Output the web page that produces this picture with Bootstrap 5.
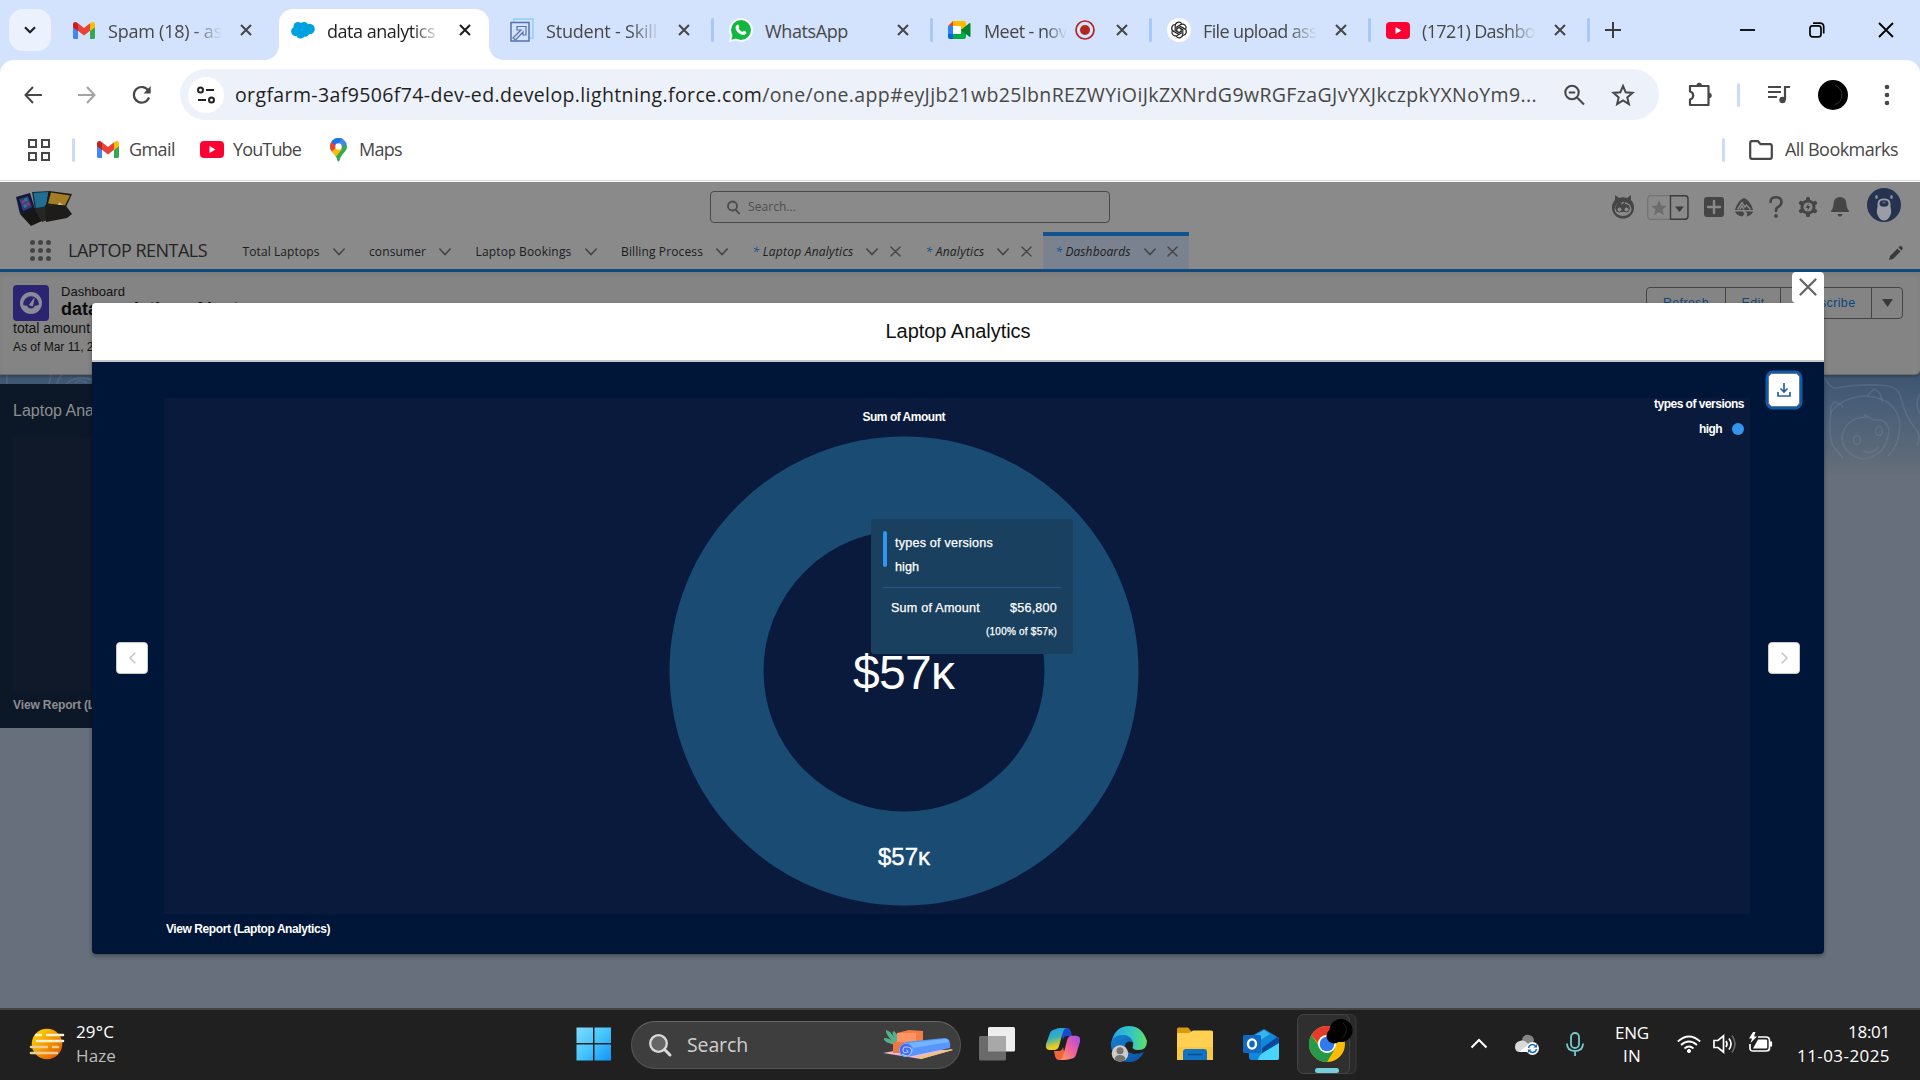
<!DOCTYPE html>
<html lang="en">
<head>
<meta charset="utf-8">
<title>data analytics</title>
<link rel="stylesheet" href="https://cdn.jsdelivr.net/npm/bootstrap@5.3.0/dist/css/bootstrap.min.css">
<style>
html,body{width:1920px;height:1080px;overflow:hidden}
body{font-family:"Open Sans","Noto Sans",sans-serif;line-height:1;color:#474747;background:#666f7b}
svg{display:block;flex:none;overflow:visible}
.fit{display:inline-block;white-space:nowrap;flex:none}
.slds{font-family:"Liberation Sans",Arial,sans-serif}
.segoe{font-family:"Open Sans","Noto Sans",sans-serif}
/* browser chrome */
.tabstrip{height:60px;background:#d3e3fd;padding-left:9px}
.tab-search{width:42px;height:42px;margin:9px 4px 0 0;border-radius:14px;background:#ebf2fe}
.tab-item{width:219px;height:60px;padding-left:17px;font-size:18px;position:relative}
.tab-item .ico{width:25px;margin-right:11px}
.tab-item .ico.gmail{padding-left:1px}
.tab-item .ttl{width:114px;height:28px;line-height:28px;white-space:nowrap;padding-top:1px}
.tab-item .fade-end{-webkit-mask-image:linear-gradient(90deg,#000 74%,transparent);mask-image:linear-gradient(90deg,#000 74%,transparent)}
.tab-item .x-btn{width:12px;height:12px;margin-left:18px}
.tab-item.meet .ttl{width:83px}
.tab-item.meet .rec{margin-left:8px}
.tab-item.meet .x-btn{margin-left:21px}
.tab-item.split::before{content:"";position:absolute;left:-1px;top:18px;width:3px;height:24px;background:#a8c7fa;border-radius:2px}
.tab-item.on{color:#1f1f1f}
.tab-item.on::after{content:"";position:absolute;left:5px;right:4px;top:9px;bottom:0;background:#fff;border-radius:14px 14px 0 0;z-index:0}
.tab-item.on>*{z-index:1;position:relative}
.tab-item .foot{position:absolute!important;bottom:0;width:14px;height:14px}
.foot.l{left:-9px;background:radial-gradient(circle at 0 0,transparent 13.5px,#fff 14px)}
.foot.r{right:-10px;background:radial-gradient(circle at 100% 0,transparent 13.5px,#fff 14px)}
.tab-item.plus{width:auto;padding-left:17px}
.win-btns{gap:53px;padding-right:26px}
.chrome-body{background:#d3e3fd;height:120px}
.chrome-in{background:#fff;border-radius:14px 14px 0 0;height:120px;padding-top:9px}
.addr-row{height:51px;padding-left:7px}
.nav-slot{width:53px}
.nav-slot.back{padding-right:2px}
.omni{width:1479px;height:51px;border-radius:26px;background:#edf1fa;margin-left:14px;padding-left:8px}
.site-ico{width:36px;height:36px;background:#fff;margin-right:11px}
.url{font-size:19.5px;color:#474747;height:28px;line-height:28px}
.url b{font-weight:400;color:#1f1f1f}
.g25{margin-left:25px}.g27{margin-left:27px}.g29{margin-left:29px}
.vbar{width:3px;height:24px;border-radius:2px;background:#c9ddfb}
.bm-row{height:59px;font-size:18px;padding-left:28px;padding-right:22px}
.bm-apps{margin-right:22px}
.bm-1{margin:0 10px 0 22px}.bm-2{margin:0 9px 0 25px}.bm-3{margin:0 12px 0 29px}
.bm-fold{margin:0 12px 0 24px}
.bm-row .fit{padding-bottom:1px}
.chrome-edge{height:2px;background:linear-gradient(#dcdcdc 50%,#fff 50%)}
/* page */
.app{height:826px;background:#666f7b;position:relative;overflow:hidden}
.ghead{height:50px;background:#8a8a8a;padding-left:16px}
.gsearch{width:400px;height:32px;border:1.5px solid #4a4a4a;border-radius:4px;margin:9px 0 0 638px;padding:0 16px;font-size:12px;color:#4f4f4f}
.gicons{margin-left:502px}
.fav{width:42px;height:25px;margin:0 15px 0 13px}
.i1{margin-left:10px}.i2{margin-left:15px}.i3{margin-left:15px}.i4{margin-left:12px}
.gav{margin:0 0 4px 17px}
.gnav{height:40px;background:#8a8a8a;border-bottom:3px solid #0f4a80;padding-left:30px;font-size:12px;color:#1c1c1c}
.gnav .nm{font-size:18px;color:#242424;margin:0 23px 0 17px;padding-bottom:1px}
.ntab{height:37px;padding:2px 12px 0 12.5px}
.ntab .chev{margin-left:13px}
.ntab .cls{margin-left:11.5px}
.ntab i b{font-weight:400;color:#0f5490}
.ntab.on{background:#7a8290;border-top:4px solid #0f5490;margin-left:-1px;padding-top:0;padding-right:11px;padding-bottom:1.5px}
.pencil{margin-right:17px}
.dhead{height:103px;background:#848484;border-bottom:1.5px solid #6e6a66;border-radius:0 0 5px 0;padding:13px 17px 0 13px;color:#111;box-shadow:0 2px 2px #0003,inset 0 4px 4px #0000000c;position:relative;z-index:1}
.dico{width:36px;height:36px;border-radius:4px;background:#2b2472;margin-right:12px}
.dtitle{margin-top:-1px}
.dtxt{font-size:13px;line-height:15px}
.dname{font-size:18px;line-height:20px;font-weight:700;color:#0b0b0b}
.dsub{font-size:14px;line-height:16px;margin-top:-1px}
.dasof{font-size:12px;line-height:14px;margin-top:4px}
.abtns{height:32px;border:1.5px solid #454545;border-radius:4px;color:#0d477c;font-size:12.5px;margin-top:2px}
.abtns>div+div{border-left:1.5px solid #454545}
.abtns .a{width:78px}.abtns .b{width:55px}.abtns .c{width:91px}.abtns .d{width:31px}
.sky{background:linear-gradient(#3c5470,#4a5f78 35%,#5a6878 75%,#666f7b);height:105px;margin-top:-4px;position:relative;z-index:0}
.sky svg{position:absolute;left:0;top:0}
.backcard{position:absolute;left:0;top:202px;width:300px;height:344px;background:#0c1827;padding:18px 13px;color:#8d8e90;z-index:1}
.backcard .t{font-size:16px;line-height:18px}
.backcard .in{height:254px;background:#10192a;margin:17px 0 8px}
.backcard .v{font-size:12px;font-weight:700}
/* modal */
.dlg{position:absolute;left:92px;top:121px;width:1732px;height:651px;border-radius:4px;z-index:3;box-shadow:0 2px 4px #0005;color:#fff}
.dlg-h{height:57px;background:#fff;color:#111;border-radius:4px 0 0 0;font-size:20px;padding-bottom:2px}
.dlg-b{height:594px;background:#001639;border-top:2px solid #c9c9c9;border-radius:0 0 4px 4px}
.dlg-x{position:absolute;right:0;top:-31px;width:32px;height:31px;background:#fff;border-radius:4px 4px 0 4px;padding-bottom:1px}
.side{width:72px;height:592px}
.side.r{width:74px}
.arrow{width:32px;height:32px;background:#fff;border-radius:4px;border:1px solid #c9c9c9;margin-left:24px;margin-top:280px}
.side.r .arrow{margin-left:18px;margin-top:235px}
.dl{width:32px;height:34px;margin:11px 0 0 18px;background:#fff;border-radius:5px;border:1px solid #777;box-shadow:0 0 0 2.5px #0b5cab}
.mid{width:1586px}
.plot{height:516px;margin-top:36px;background:#0a1a3c;position:relative;font-size:12px}
.plot>svg{position:absolute;left:0;top:0}
.vr2{font-size:12px;font-weight:700;margin:9px 0 0 2px}
.legend{position:absolute;right:6px;top:0;font-weight:700}
.legend .key{margin-top:13px}
.legend .dot{width:12px;height:12px;border-radius:50%;background:#3296ed;margin-left:10px}
.tip{position:absolute;left:707px;top:121px;width:202px;height:135px;background:#1a405f;border-radius:3px;padding:12px;font-size:12.600px}
.tip .fit{-webkit-text-stroke:.25px #fff}
.tip .bar{width:4px;height:36px;border-radius:2px;background:#3296ed;margin-right:8px}
.tip .two{line-height:24px}
.tip .hr2{height:1px;background:#2c5488;margin:8px 0 14px}
.tip .row-a{padding:0 4px 0 8px}
.tip .row-b{padding:12px 4px 0 0;font-size:10px}
/* taskbar */
.task{height:72px;background:#202020;border-top:2px solid #444;color:#fff;font-size:17px;padding-bottom:2px}
.wx{width:576px;padding-left:29px}
.wx .tx{margin-left:11px;line-height:24px}
.wx .sub{color:#bdbdbd}
.sbox{width:330px;height:48px;border-radius:24px;background:#3e3e3e;border:1.5px solid #555;border-top-color:#666;margin:1px 18px 0 19px;padding:0 7px 0 17px;font-size:19.5px;color:#cfcfcf}
.sbox .fit{margin-left:16px}
.t2{margin-left:31px}.t4{margin-left:30px}.t5{margin-left:18px}
.chrome-app{width:60px;height:60px;position:relative}
.tray{padding-right:30px}
.m24{margin-left:24px}.m28{margin-left:28px}.m12{margin-left:12px}
.lh23{line-height:23px}.lh24{line-height:24px}
</style>
<script src="https://cdn.jsdelivr.net/npm/bootstrap@5.3.0/dist/js/bootstrap.bundle.min.js"></script>
</head>
<body class="d-flex flex-column">
<svg width="0" height="0" class="position-absolute">
<defs>
<symbol id="x" viewBox="0 0 12 12"><path d="M1 1l10 10M11 1L1 11" stroke="currentColor" stroke-width="2.1" fill="none"/></symbol>
<symbol id="thinx" viewBox="0 0 12 12"><path d="M1 1l10 10M11 1L1 11" stroke="#454545" stroke-width="1.5" stroke-linecap="round" fill="none"/></symbol>
<symbol id="chev" viewBox="0 0 12 8"><path d="M.8 1L6 6.600 11.200 1" stroke="#454545" stroke-width="1.6" stroke-linecap="round" fill="none"/></symbol>
<symbol id="gm" viewBox="0 0 22 17"><path d="M0 2.500V15.500Q0 17 1.500 17H5V7z" fill="#4285f4"/><path d="M22 2.500V15.500Q22 17 20.500 17H17V7z" fill="#34a853"/><path d="M17 1.500V9l5-3.800V2.500C22 0 19.500-.6 17.800.7z" fill="#fbbc04"/><path d="M5 1.500V9L0 5.200V2.500C0 0 2.500-.6 4.200.7z" fill="#c5221f"/><path d="M5 1.300L11 6l6-4.700V8.800L11 13.400 5 8.800z" fill="#ea4335"/></symbol>
<symbol id="yt" viewBox="0 0 24 17"><rect width="24" height="17" rx="4" fill="#ff0033"/><path d="M9.500 5v7l6-3.500z" fill="#fff"/></symbol>
</defs>
</svg>

<!-- tab strip -->
<div class="tabstrip d-flex">
  <div class="tab-search d-flex align-items-center justify-content-center"><svg width="12" height="8" viewBox="0 0 12 8"><path d="M1 1.200l5 5 5-5" stroke="#1f1f1f" stroke-width="2.200" fill="none"/></svg></div>
  <div class="tab-item d-flex align-items-center"><div class="ico gmail"><svg width="22" height="17"><use href="#gm"/></svg></div><div class="ttl fade-end"><span class="fit" data-w="114">Spam (18) - as</span></div><svg class="x-btn"><use href="#x"/></svg></div>
  <div class="tab-item on d-flex align-items-center"><span class="foot l"></span><div class="ico"><svg width="24" height="18" viewBox="0 0 24 17"><g fill="#00a1e0"><circle cx="7" cy="5" r="4.500"/><circle cx="13" cy="4.500" r="4"/><circle cx="18.500" cy="7.500" r="5.300"/><circle cx="4.800" cy="10" r="4.700"/><circle cx="9.500" cy="12.500" r="4.500"/><circle cx="14" cy="11" r="4.300"/></g></svg></div><div class="ttl fade-end"><span class="fit" data-w="108">data analytics</span></div><svg class="x-btn"><use href="#x"/></svg><span class="foot r"></span></div>
  <div class="tab-item d-flex align-items-center"><div class="ico"><svg width="24" height="24" viewBox="0 0 24 24" fill="none"><path d="M4 4V1H23V20H19" stroke="#8fd0f4" stroke-width="1.500"/><path d="M1 4.500H19V23H1z" stroke="#5672ac" stroke-width="1.500"/><path d="M3 20l8-8H7V8.500h9V17h-3v-3L5.500 22z" stroke="#5672ac" stroke-width="1.200"/></svg></div><div class="ttl fade-end"><span class="fit" data-w="111">Student - Skill</span></div><svg class="x-btn"><use href="#x"/></svg></div>
  <div class="tab-item split d-flex align-items-center"><div class="ico"><svg width="24" height="24" viewBox="0 0 24 24"><circle cx="12" cy="12" r="11.800" fill="#fff"/><path d="M0 24l2-7 6 5z" fill="#fff"/><circle cx="12" cy="12" r="10" fill="#12b83e"/><path d="M2.300 21.700l1.500-5.500 4 4z" fill="#12b83e"/><path d="M7.500 7.500c1-1.500 2-1 2.500.5.400 1.200.4 1.500-.3 2.500.9 1.600 2 2.600 3.800 3.400.8-1 1.200-1.300 2-.9 2 .9 2.200 1.200 1.600 2.300-1.100 2-3.300 2-5.600.9-2.800-1.300-5-4.100-5-6.400 0-.9.400-1.600 1-2.300z" fill="#fff"/></svg></div><div class="ttl"><span class="fit" data-w="83">WhatsApp</span></div><svg class="x-btn"><use href="#x"/></svg></div>
  <div class="tab-item meet split d-flex align-items-center"><div class="ico"><svg width="23" height="18" viewBox="0 0 23 18"><path d="M0 5H5V13H0z" fill="#2684fc"/><path d="M0 13H5V18H2Q0 18 0 16z" fill="#0066da"/><path d="M5 0V5H0z" fill="#ea4335"/><path d="M5 0H16Q18 0 18 2V7L13 10V5H5z" fill="#ffba00"/><path d="M5 13H13V8l5 3v5Q18 18 16 18H5z" fill="#00ac47"/><path d="M13 9l8-6.600Q22.500 1.500 22.500 3V15q0 1.500-1.500.6z" fill="#00832d"/><path d="M5 5H13V13H5z" fill="#fff"/></svg></div><div class="ttl fade-end"><span class="fit" data-w="83">Meet - nov</span></div><svg class="rec" width="20" height="20" viewBox="0 0 20 20"><circle cx="10" cy="10" r="9" fill="none" stroke="#b3261e" stroke-width="1.700"/><circle cx="10" cy="10" r="5" fill="#b3261e"/></svg><svg class="x-btn"><use href="#x"/></svg></div>
  <div class="tab-item split d-flex align-items-center"><div class="ico"><svg width="24" height="24" viewBox="0 0 24 24"><circle cx="12" cy="12" r="12" fill="#fff"/><g fill="none" stroke="#222" stroke-width="1.200"><path id="pt" d="M12 14.500L8.200 12.300V7.700a3.600 3.600 0 0 1 6.500-2"/><use href="#pt" transform="rotate(60 12 12)"/><use href="#pt" transform="rotate(120 12 12)"/><use href="#pt" transform="rotate(180 12 12)"/><use href="#pt" transform="rotate(240 12 12)"/><use href="#pt" transform="rotate(300 12 12)"/></g></svg></div><div class="ttl fade-end"><span class="fit" data-w="114">File upload ass</span></div><svg class="x-btn"><use href="#x"/></svg></div>
  <div class="tab-item split d-flex align-items-center"><div class="ico"><svg width="24" height="17"><use href="#yt"/></svg></div><div class="ttl fade-end"><span class="fit" data-w="113">(1721) Dashbo</span></div><svg class="x-btn"><use href="#x"/></svg></div>
  <div class="tab-item plus split d-flex align-items-center"><svg width="16" height="16" viewBox="0 0 16 16"><path d="M8 0V16M0 8H16" stroke="#3c3c3c" stroke-width="2"/></svg></div>
  <div class="win-btns d-flex align-items-center ms-auto">
    <svg width="16" height="16" viewBox="0 0 16 16"><path d="M0 8H15" stroke="#000" stroke-width="1.800"/></svg>
    <svg width="16" height="16" viewBox="0 0 16 16" fill="none" stroke="#000" stroke-width="1.700"><rect x="1" y="3.800" width="11" height="11" rx="2.500"/><path d="M4 1.200h7q3.700 0 3.700 3.700v6.500"/></svg>
    <svg width="16" height="16" viewBox="0 0 16 16"><path d="M1 1l14 14M15 1L1 15" stroke="#000" stroke-width="1.800"/></svg>
  </div>
</div>

<!-- toolbar and bookmarks -->
<div class="chrome-body">
<div class="chrome-in">
  <div class="addr-row d-flex align-items-center">
    <div class="nav-slot back d-flex justify-content-center"><svg width="18" height="18" viewBox="0 0 18 18" fill="none" stroke="#474747" stroke-width="2"><path d="M9 1L1.500 9 9 17M1.500 9H18"/></svg></div>
    <div class="nav-slot d-flex justify-content-center"><svg width="18" height="18" viewBox="0 0 18 18" fill="none" stroke="#a3a3a3" stroke-width="2"><path d="M9 1l7.500 8L9 17M16.500 9H0"/></svg></div>
    <div class="nav-slot d-flex justify-content-center ps-1"><svg width="18" height="18" viewBox="0 0 18 18" fill="none" stroke="#474747" stroke-width="2.200"><path d="M16 11.500A7.800 7.800 0 1 1 15.500 5"/><path d="M17.700 0V7.500H10.500z" fill="#474747" stroke="none"/></svg></div>
    <div class="omni d-flex align-items-center">
      <div class="site-ico rounded-circle d-flex align-items-center justify-content-center"><svg width="18" height="18" viewBox="0 0 18 18" fill="none" stroke="#222" stroke-width="2"><circle cx="3.500" cy="4" r="2.500"/><path d="M9 4h8M1 14h8"/><circle cx="14.500" cy="14" r="2.500"/></svg></div>
      <span class="url fit" data-w="1302"><b>orgfarm-3af9506f74-dev-ed.develop.lightning.force.com</b>/one/one.app#eyJjb21wb25lbnREZWYiOiJkZXNrdG9wRGFzaGJvYXJkczpkYXNoYm9...</span>
      <svg class="g25" width="24" height="24" viewBox="0 0 24 24" fill="none" stroke="#474747" stroke-width="2.100"><circle cx="10" cy="9.500" r="6.700"/><path d="M15 14.500l7 7M6.800 9.500h6.400"/></svg>
      <svg class="g25" width="24" height="24" viewBox="0 0 24 24" fill="none" stroke="#474747" stroke-width="2"><path d="M12 3l2.700 6.300 6.800.6-5.200 4.500 1.600 6.700L12 17.500l-5.900 3.600 1.600-6.700L2.500 9.900l6.800-.6z"/></svg>
    </div>
    <svg class="g29" width="24" height="24" viewBox="0 0 24 24" fill="none" stroke="#474747" stroke-width="2.200"><path d="M2 3H20.500V22H2V16.500q3.200-.8 3.200-4t-3.200-4z" stroke-linejoin="round"/><path d="M8.500 2.500a2.700 2.700 0 0 1 5.400 0zM21 9.800a2.700 2.700 0 0 1 0 5.400z" fill="#474747" stroke="none"/></svg>
    <div class="vbar g25"></div>
    <svg class="g27" width="24" height="24" viewBox="0 0 24 24" fill="none" stroke="#474747" stroke-width="2.200"><path d="M1 4h13M1 9h13M1 14h9"/><path d="M18 17V4h5"/><circle cx="15.500" cy="17" r="3.200" fill="#474747" stroke="none"/></svg>
    <svg class="g27" width="30" height="30" viewBox="0 0 30 30"><circle cx="15" cy="15" r="15" fill="#000"/><path d="M17 5.500a10 10 0 0 1 0 19" stroke="#333" fill="none"/></svg>
    <svg class="g27" width="24" height="24" viewBox="0 0 24 24" fill="#474747"><circle cx="12" cy="4" r="2.300"/><circle cx="12" cy="12" r="2.300"/><circle cx="12" cy="20" r="2.300"/></svg>
  </div>
  <div class="bm-row d-flex align-items-center">
    <svg class="bm-apps" width="22" height="22" viewBox="0 0 22 22" fill="none" stroke="#474747" stroke-width="2"><path d="M1 1h7v7H1zM14 1h7v7h-7zM1 14h7v7H1zM14 14h7v7h-7z"/></svg>
    <div class="vbar"></div>
    <svg class="bm-1" width="22" height="17"><use href="#gm"/></svg><span class="fit" data-w="46">Gmail</span>
    <svg class="bm-2" width="24" height="17"><use href="#yt"/></svg><span class="fit" data-w="68">YouTube</span>
    <svg class="bm-3" width="17" height="24" viewBox="0 0 17 24"><clipPath id="pin"><path d="M8.500 0A8.400 8.400 0 0 1 17 8.500C17 14 11 15.500 9.800 22Q8.500 25 7.200 22C6 15.500 0 14 0 8.500A8.400 8.400 0 0 1 8.500 0z"/></clipPath><g clip-path="url(#pin)"><path d="M0 0H17V24H0z" fill="#34a853"/><path d="M0 18V8L8 8l4 3-7 9z" fill="#fbbc04"/><path d="M0 0L8 8 0 15z" fill="#ea4335"/><path d="M1 0H14L7 8.500 1.500 4z" fill="#1a73e8"/><path d="M12 0L17 6 8 10 7 8z" fill="#4285f4"/></g><circle cx="8.500" cy="8.500" r="3.200" fill="#fff"/></svg><span class="fit" data-w="43">Maps</span>
    <div class="vbar ms-auto"></div>
    <svg class="bm-fold" width="24" height="20" viewBox="0 0 24 20" fill="none" stroke="#474747" stroke-width="2.200"><path d="M1.200 17V3q0-1.800 1.800-1.800H9l2.500 3H21q1.800 0 1.800 1.800V17q0 1.800-1.800 1.800H3Q1.200 18.800 1.200 17z"/></svg><span class="fit" data-w="113">All Bookmarks</span>
  </div>
</div>
</div>
<div class="chrome-edge"></div>

<!-- application page -->
<div class="app slds">
  <div class="ghead d-flex align-items-center">
    <svg width="56" height="36" viewBox="0 -1 56 36"><path d="M0 7L14 3l5 16L4 24z" fill="#15153a"/><path d="M3 9l9-3 4 11-9 4z" fill="#2b3f78"/><path d="M5 11l3-1 1 3-3 1zM10 13l3-1 1 3-3 1z" fill="#8a3b76"/><path d="M8 9l3-1 1 3-3 1zM7 15l3-1 1 3-3 1z" fill="#2f7a8e"/><path d="M16 2L34 1 32 20 19 20z" fill="#122c3a"/><path d="M17.500 3L32 2 31 16 20 18z" fill="#1f6f94"/><path d="M33 1L56 4 50 17 30 15z" fill="#1c1a12"/><path d="M35 2.500l19 3-5 10-17-2z" fill="#a57c26"/><path d="M43 12l4 3h-5z" fill="#c9b98a"/><path d="M4 24l15-6 9 12-13 6z" fill="#161616"/><path d="M19 20l12-4 3 13-8 3z" fill="#262626"/><path d="M29 15l21 1 6 8-5 4-21 4z" fill="#1d1c1a"/></svg>
    <div class="gsearch segoe d-flex align-items-center align-self-start"><svg width="13" height="14" viewBox="0 0 13 14" fill="none" stroke="#4a4a4a" stroke-width="1.800"><circle cx="5.500" cy="6" r="4.500"/><path d="M8.800 9.800L12.500 14"/></svg><span class="fit ms-2 text-start" data-w="48">Search...</span></div>
    <div class="gicons d-flex align-items-center">
      <svg width="22" height="26" viewBox="0 0 22 26"><path d="M3 6V1l4 3q4-1.500 8 0l4-3v5a11 11 0 1 1-16 0z" fill="#454545"/><ellipse cx="11" cy="15" rx="8.500" ry="7" fill="#8a8a8a"/><path d="M3 14q2-6 7-6l-1 3 4-3 0 2q4 0 5 4l-2 4H5z" fill="#454545"/><circle cx="7.500" cy="15.500" r="2.500" fill="#8a8a8a" stroke="#454545"/><circle cx="14.500" cy="15.500" r="2.500" fill="#8a8a8a" stroke="#454545"/></svg>
      <svg class="fav" viewBox="0 0 42 25"><rect x=".7" y=".7" width="40" height="23.600" rx="3" fill="none" stroke="#747474" stroke-width="1.300"/><path d="M23.500.7H38q3 0 3 3v17.600q0 3-3 3H23.500z" fill="none" stroke="#3c3c3c" stroke-width="1.400"/><path d="M12 5l2.200 5.500 5.600.4-4.300 3.700 1.400 5.700L12 17.200l-4.900 3.100 1.400-5.700-4.300-3.700 5.600-.4z" fill="#6c6c6c"/><path d="M28 11.500h9l-4.500 5.500z" fill="#3c3c3c"/></svg>
      <svg width="20" height="20" viewBox="0 0 20 20"><rect width="20" height="20" rx="3" fill="#454545"/><path d="M10 4v12M4 10h12" stroke="#8a8a8a" stroke-width="2.400" stroke-linecap="round"/></svg>
      <svg class="i1" width="20" height="20" viewBox="0 0 20 20"><path d="M1 13Q4 3 10 1q6 2 9 12z" fill="#454545"/><path d="M3.500 12.500l4.500-7 3 4.500 1.500-2 4 4.500M6 12.500l2-3.500 2 3.500" stroke="#8a8a8a" stroke-width="1.400" fill="none"/><path d="M1 14.500h7.500l2 2-2 3Q3 19 1 14.500zM11 14.500h8q-1 3.500-6.500 5l1-3z" fill="#454545"/></svg>
      <svg class="i2" width="14" height="22" viewBox="0 0 14 22" fill="none"><path d="M1.500 6q0-4.700 5.500-4.700T12.500 6q0 3-3 4.700Q7 12 7 14.500V15" stroke="#454545" stroke-width="2.600" stroke-linecap="round"/><circle cx="7" cy="20" r="1.900" fill="#454545"/></svg>
      <svg class="i3" width="20" height="20" viewBox="0 0 20 20"><g fill="#454545"><circle cx="10" cy="10" r="7.500"/><g id="gt"><rect x="8" y="0" width="4" height="20" rx="1.500"/></g><use href="#gt" transform="rotate(60 10 10)"/><use href="#gt" transform="rotate(120 10 10)"/></g><circle cx="10" cy="10" r="4.600" fill="#8a8a8a"/><path d="M11 5.500L7.500 11H10l-1 3.500L12.500 9H10z" fill="#454545"/></svg>
      <svg class="i4" width="20" height="20" viewBox="0 0 20 20" fill="#454545"><path d="M10 0q6 0 6.300 6.500.2 4.500 2.500 7 .7 1.500-.8 1.500H2q-1.500 0-.8-1.500 2.300-2.500 2.500-7Q4 0 10 0zM7.500 17h5q-.5 2.700-2.500 2.700T7.500 17z"/></svg>
      <svg class="gav" width="34" height="34" viewBox="0 0 34 34"><circle cx="17" cy="17" r="17" fill="#253350"/><path d="M10.500 19q-.5-6 2-7.500 4.500-2 9 0 2.500 1.500 2 7.500 1.500 5-.5 9-2.500 4.500-6 4.500T11 28q-2-4-.5-9z" fill="#9a9da3"/><ellipse cx="17" cy="15.500" rx="4.500" ry="3.200" fill="#253350"/><ellipse cx="17" cy="14.500" rx="2" ry="1" fill="#55617a"/><ellipse cx="9.500" cy="9" rx="1.300" ry="2" fill="#8a8f98"/><ellipse cx="24.500" cy="9" rx="1.300" ry="2" fill="#8a8f98"/></svg>
    </div>
  </div>
  <div class="gnav segoe d-flex align-items-center">
    <svg width="21" height="21" viewBox="0 0 21 21" fill="#454545"><g id="wr"><circle cx="2.500" cy="2.500" r="2.500"/><circle cx="10.500" cy="2.500" r="2.500"/><circle cx="18.500" cy="2.500" r="2.500"/></g><use href="#wr" y="8"/><use href="#wr" y="16"/></svg>
    <span class="nm fit" data-w="139">LAPTOP RENTALS</span>
    <div class="ntab d-flex align-items-center"><span class="fit" data-w="77">Total Laptops</span><svg class="chev" width="12" height="8"><use href="#chev"/></svg></div>
    <div class="ntab d-flex align-items-center"><span class="fit" data-w="57">consumer</span><svg class="chev" width="12" height="8"><use href="#chev"/></svg></div>
    <div class="ntab d-flex align-items-center"><span class="fit" data-w="96">Laptop Bookings</span><svg class="chev" width="12" height="8"><use href="#chev"/></svg></div>
    <div class="ntab d-flex align-items-center"><span class="fit" data-w="82">Billing Process</span><svg class="chev" width="12" height="8"><use href="#chev"/></svg></div>
    <div class="ntab d-flex align-items-center"><i class="fit" data-w="101"><b>*</b> Laptop Analytics</i><svg class="chev" width="12" height="8"><use href="#chev"/></svg><svg class="cls" width="11" height="11"><use href="#thinx"/></svg></div>
    <div class="ntab d-flex align-items-center"><i class="fit" data-w="59"><b>*</b> Analytics</i><svg class="chev" width="12" height="8"><use href="#chev"/></svg><svg class="cls" width="11" height="11"><use href="#thinx"/></svg></div>
    <div class="ntab on d-flex align-items-center"><i class="fit" data-w="75"><b>*</b> Dashboards</i><svg class="chev" width="12" height="8"><use href="#chev"/></svg><svg class="cls" width="11" height="11"><use href="#thinx"/></svg></div>
    <svg class="ms-auto pencil" width="14" height="14" viewBox="0 0 14 10"><path d="M0 14l1-4 7.500-7.500 3 3L4 13zM9.500 1.500L11 0q1-.5 2 .7t.7 2L12.500 4.500z" fill="#3a3a3a"/></svg>
  </div>
  <div class="dhead d-flex justify-content-between align-items-start">
    <div>
      <div class="d-flex">
        <div class="dico d-flex align-items-center justify-content-center"><svg width="22" height="22" viewBox="0 0 22 22"><circle cx="11" cy="11" r="11" fill="#8b8b96"/><path d="M3 12.500a8 8.200 0 1 1 16 0q-1.500 1.500-4 1-1 3-4 3t-4-3q-2.500.5-4-1z" fill="#2b2472"/><path d="M9.500 13L14 6.500 12.500 14z" fill="#8b8b96" stroke="#8b8b96" stroke-width="1" stroke-linejoin="round"/></svg></div>
        <div class="dtitle"><div class="dtxt"><span class="fit" data-w="64">Dashboard</span></div><div class="dname">data analytics of laptops</div></div>
      </div>
      <div class="dsub">total amount of laptops</div>
      <div class="dasof">As of Mar 11, 2025, 5:59 PM</div>
    </div>
    <div class="abtns d-flex">
      <div class="a d-flex align-items-center justify-content-center"><span class="fit" data-w="46">Refresh</span></div>
      <div class="b d-flex align-items-center justify-content-center"><span class="fit" data-w="23">Edit</span></div>
      <div class="c d-flex align-items-center justify-content-center"><span class="fit" data-w="59">Subscribe</span></div>
      <div class="d d-flex align-items-center justify-content-center"><svg width="11" height="8" viewBox="0 0 11 8"><path d="M0 0h11L5.500 8z" fill="#3a3a3a"/></svg></div>
    </div>
  </div>
  <div class="sky">
    <svg width="1920" height="105" viewBox="0 371 1920 105" fill="none" stroke="#8695a8" stroke-opacity=".25" stroke-width="1.600"><path d="M7 375v9M49 384l2-9M57 384q2-7 6-10M66 384q12-10 26-4M75 383q5-5 12 0"/><path d="M1824 376q5 12 12 12 26-5 52-2 10 1 13 12 4 18 14 30 7 8 2 18M1920 394q-6 10 0 20M1831 414q-2-9 4-12 7 2 8 6M1867 396l7-7q7 2 8 13"/><path d="M1831 412q12-15 34-16 33 2 35 30-1 20-12 30M1831 412q-3 24 2 34l10 12"/><path d="M1842 437q3-19 24-20l-2-3 9 6q14-2 16 10-2 26-26 29-20-4-21-22z"/><ellipse cx="1857" cy="440" rx="3.500" ry="4.500"/><ellipse cx="1879" cy="431" rx="3.500" ry="4.500"/><path d="M1863 451q10 4 15-4"/></svg>
  </div>
  <div class="backcard"><div class="t">Laptop Analytics</div><div class="in"></div><div class="v"><span class="fit" data-w="173">View Report (Laptop Analytics)</span></div></div>

  <div class="dlg">
    <div class="dlg-x d-flex align-items-center justify-content-center"><svg width="18" height="18" viewBox="0 0 18 18"><path d="M1.500 1.500l15 15M16.500 1.500l-15 15" stroke="#666" stroke-width="2.300" stroke-linecap="round"/></svg></div>
    <div class="dlg-h d-flex align-items-center justify-content-center"><span class="fit" data-w="145">Laptop Analytics</span></div>
    <div class="dlg-b d-flex">
      <div class="side"><div class="arrow d-flex align-items-center justify-content-center"><svg width="7" height="12" viewBox="0 0 7 12"><path d="M6.300.8L1 6l5.300 5.200" stroke="#c4c4c4" stroke-width="1.500" fill="none"/></svg></div></div>
      <div class="mid">
        <div class="plot">
          <svg width="1586" height="515" viewBox="164 398 1586 515" font-family="Liberation Sans, DejaVu Sans, sans-serif" fill="#fff">
            <circle cx="904" cy="671" r="187.500" fill="none" stroke="#194b73" stroke-width="94"/>
            <text x="904" y="421" text-anchor="middle" font-size="12" font-weight="700" textLength="83">Sum of Amount</text>
            <text x="853" y="688.500" font-size="48" textLength="102">$57ᴋ</text>
            <text x="878" y="865" font-size="24" textLength="52" stroke="#fff" stroke-width=".4">$57ᴋ</text>
          </svg>
          <div class="legend text-end"><div><span class="fit" data-w="90">types of versions</span></div><div class="key d-flex align-items-center justify-content-end"><span class="fit" data-w="23">high</span><span class="dot"></span></div></div>
          <div class="tip">
            <div class="d-flex"><div class="bar"></div><div class="two"><span class="fit" data-w="98">types of versions</span><br><span class="fit" data-w="24">high</span></div></div>
            <div class="hr2"></div>
            <div class="row-a d-flex justify-content-between"><span class="fit" data-w="89">Sum of Amount</span><span class="fit" data-w="47">$56,800</span></div>
            <div class="row-b text-end"><span class="fit" data-w="71">(100% of $57ᴋ)</span></div>
          </div>
        </div>
        <div class="vr2"><span class="fit" data-w="164">View Report (Laptop Analytics)</span></div>
      </div>
      <div class="side r">
        <div class="dl d-flex align-items-center justify-content-center"><svg width="14" height="14" viewBox="0 0 14 14" fill="none" stroke="#2a5f9e" stroke-width="1.700"><path d="M7 0v8.500M3.500 5.500L7 9l3.500-3.500M1 9v4h12V9"/></svg></div>
        <div class="arrow d-flex align-items-center justify-content-center"><svg width="7" height="12" viewBox="0 0 7 12"><path d="M.7.8L6 6 .7 11.200" stroke="#c4c4c4" stroke-width="1.500" fill="none"/></svg></div>
      </div>
    </div>
  </div>
</div>

<!-- taskbar -->
<div class="task d-flex align-items-center">
  <div class="wx d-flex align-items-center">
    <svg width="36" height="32" viewBox="0 0 36 32"><defs><linearGradient id="sun" x2="1" y2="1"><stop offset=".2" stop-color="#fdc500"/><stop offset=".9" stop-color="#e65a00"/></linearGradient></defs><circle cx="18" cy="16" r="15.300" fill="url(#sun)"/><g stroke="#fff2cc" stroke-width="2.600" stroke-linecap="round"><path d="M7 7h5M18 7h16M8 13h26"/><path d="M2 19h16M24 19h5M2 25h26" stroke="#e6cf96"/></g></svg>
    <div class="tx"><span class="fit" data-w="38">29°C</span><br><span class="fit sub" data-w="40">Haze</span></div>
  </div>
  <svg width="36" height="36" viewBox="0 0 36 36"><defs><linearGradient id="wn" gradientUnits="userSpaceOnUse" x1="0" y1="0" x2="36" y2="36"><stop stop-color="#84dcff"/><stop offset=".5" stop-color="#45c5fc"/><stop offset="1" stop-color="#0c90f8"/></linearGradient></defs><path d="M.5 1.500H17V17H.5zM18.500 1.500H35V17H18.500zM.5 18.500H17V34.500H.5zM18.500 18.500H35V34.500H18.500z" fill="url(#wn)"/></svg>
  <div class="sbox d-flex align-items-center">
    <svg width="22" height="22" viewBox="0 0 22 22" fill="#666" stroke="#dadada" stroke-width="2.300"><circle cx="9.500" cy="9.500" r="8.300"/><path d="M15.500 15.500l5.500 5.500" stroke-width="3" stroke-linecap="round"/></svg>
    <span class="fit" data-w="61">Search</span>
    <svg class="ms-auto" width="70" height="32" viewBox="0 0 70 32"><path d="M0 24L22 20l48 1-32 9z" fill="#eeb9cf"/><path d="M38 30l32-9-2-1-34 8z" fill="#efc37a"/><path d="M14 16Q0 14 1 9q6 0 9 4Q2 5 3 1q5 1 8 8Q8 3 11 2q6 5 4 14z" fill="#54b08c"/><path d="M14 4l12-3 14 1v12l-26 1z" fill="#f47c46"/><path d="M14 4h19v9H14z" fill="#ff9462"/><path d="M10 13h14v11H10z" fill="#ee7640"/><path d="M22 13L62 9q6 0 5 10L24 28z" fill="#5797fb"/><path d="M26 14L62 10q4 0 4 3L30 19z" fill="#76b3ff"/><circle cx="23" cy="21" r="7" fill="#5360e8"/><path d="M23 21a2 2 0 0 1 2 2q-5 2-5-2t5-3 3 6-9 1" stroke="#8bd5ff" stroke-width="1.200" fill="none"/><circle cx="23" cy="21" r="6.600" fill="none" stroke="#68b6ff"/></svg>
  </div>
  <svg width="36" height="34" viewBox="0 0 36 34"><rect x="9" y="0" width="27" height="24.500" rx="1.500" fill="#eee"/><rect x="0" y="9" width="27" height="24.500" rx="1.500" fill="#6a6a6a"/><path d="M9 9h18v15.500H9z" fill="#a8a8a8"/></svg>
  <svg class="t2" width="34" height="32" viewBox="0 0 34 32"><defs><linearGradient id="c1" x2=".3" y2="1"><stop stop-color="#1a9cf5"/><stop offset=".5" stop-color="#37aebc"/><stop offset=".9" stop-color="#f0cd1c"/></linearGradient><linearGradient id="c2" x1="1" x2="0" y2="1"><stop stop-color="#a24df0"/><stop offset=".5" stop-color="#f0609c"/><stop offset="1" stop-color="#ffa65a"/></linearGradient></defs><path d="M14 0h7q3 0 4 4l1 4h-5q-3 0-4 4z" fill="#1b4ac8"/><path d="M20 32h-7q-3 0-4-4l-1-5h5q3 0 4-4z" fill="#f2653a"/><path d="M10 1q1-1 4-1h7q-3 0-4 4l-4 14q-1 4-5 4H4q-5 0-4-6L4 5q1-3 6-4z" fill="url(#c1)"/><path d="M24 31q-1 .8-4 .8H13q3 0 4-4l4-15q1-5 5-5h4q5 0 4 6l-4 13q-1 4-6 4.200z" fill="url(#c2)"/></svg>
  <svg class="t2" width="36" height="36" viewBox="0 0 36 36"><defs><linearGradient id="e1"><stop stop-color="#29a7e4"/><stop offset=".55" stop-color="#31c5c6"/><stop offset="1" stop-color="#62e160"/></linearGradient><linearGradient id="e2" y2="1"><stop stop-color="#1682d2"/><stop offset="1" stop-color="#0c50a0"/></linearGradient></defs><path d="M0 17Q1 8 12 8q11 1 12 9-8-4-10 2 0 8 9 9 6 0 10-2-5 10-15 10Q2 36 0 20z" fill="url(#e2)"/><path d="M1 14Q5 0 18 0t18 15q0 10-10 9-6-1-4-4 1-3-1-6-3-5-9-5Q4 9 1 14z" fill="url(#e1)"/><circle cx="9" cy="27.500" r="8.300" fill="#cdccc9"/><circle cx="9" cy="24.800" r="3.500" fill="#77736f"/><path d="M3.500 33q1-4 5.500-4t5.500 4q-5.500 5-11 0z" fill="#77736f"/></svg>
  <svg class="t4" width="36" height="34" viewBox="0 0 36 34"><path d="M0 2Q0 .5 1.500.5H11l3 3.500 1 6H0z" fill="#d99a0c"/><path d="M0 6H12l4-2.500H34.500Q36 3.500 36 5V33H0z" fill="#ffd051"/><path d="M0 20H36V33H0z" fill="#f8bd32" opacity=".5"/><path d="M6 33V25q0-3 3-3H27q3 0 3 3v8z" fill="#1173c4"/><path d="M11 27.500H25" stroke="#0b4d8a" stroke-width="1.500"/></svg>
  <svg class="t4" width="36" height="31" viewBox="0 0 36 31"><path d="M5 9L21 0 36 9V29q0 2-2 2H9q-3 0-3-3z" fill="#1488d8"/><path d="M9 8l12-7 6 4-14 9z" fill="#35b4ee"/><path d="M19 19L34 8l2 2v5L19 25z" fill="#09489c"/><path d="M15 31q1-5 6-8l15-9V29q0 2-2 2z" fill="#48d4fc"/><rect y="6" width="18" height="18" rx="1.500" fill="#1368c2"/><ellipse cx="9" cy="15" rx="4" ry="4.600" fill="none" stroke="#fff" stroke-width="2.400"/></svg>
  <div class="chrome-app t5"><svg width="60" height="60" viewBox="0 0 60 60"><rect x="7" y=".5" width="52" height="59" rx="5" fill="#2a2a2a" stroke="#3a3a3a"/><rect x=".5" y=".5" width="52" height="59" rx="6" fill="#2f2f2f" stroke="#444"/><circle cx="30" cy="30" r="18" fill="#fbbc05"/><path d="M14.400 21A18 18 0 0 1 45.600 21H30q-8 0-9 8z" fill="#e33b2e"/><path d="M14.400 21A18 18 0 0 0 30 48l8.500-14Q34 40 26 38z" fill="#279847"/><circle cx="30" cy="30" r="9" fill="#fff"/><circle cx="30" cy="30" r="7.300" fill="#2f7bee"/><circle cx="44" cy="16.500" r="11.500" fill="#000"/><circle cx="37" cy="22" r="7.500" fill="#000"/><path d="M46 9q7 6 0 15" stroke="#222" fill="none"/><rect x="18" y="54" width="24" height="5" rx="2.500" fill="#76cfdb"/></svg></div>
  <div class="tray d-flex align-items-center ms-auto">
    <svg width="24" height="24" viewBox="0 0 24 24"><path d="M4.500 15.500L12 8l7.500 7.500" stroke="#fff" stroke-width="2" fill="none"/></svg>
    <svg class="m24" width="24" height="24" viewBox="0 0 24 24"><path d="M7 7q2-5 7-4 5 1 5 6l-6 5z" fill="#858585"/><path d="M5 20q-5 0-5-5t5-6q3-2 6 1l5 4v6z" fill="#d9d9d9"/><path d="M4 20q8-8 12-6v6z" fill="#fff"/><circle cx="17.500" cy="16.500" r="6.500" fill="#fff"/><path d="M13.500 16a4 4 0 0 1 7-2M21.500 17a4 4 0 0 1-7 2" stroke="#1468b8" stroke-width="1.600" fill="none"/><path d="M22 12v3.500h-3.500zM13 21v-3.500h3.500z" fill="#1468b8"/></svg>
    <svg class="m24" width="24" height="24" viewBox="0 0 24 24" fill="none" stroke="#76c8cf" stroke-width="1.800"><rect x="8" y="1" width="8" height="15" rx="4"/><path d="M4 11.500q0 7.500 8 7.500t8-7.500M12 19v5"/></svg>
    <div class="m28 text-center lh23"><span class="fit" data-w="34">ENG</span><br><span class="fit" data-w="18">IN</span></div>
    <svg class="m28" width="24" height="24" viewBox="0 0 24 24" fill="none" stroke="#fff" stroke-width="1.700"><path d="M.8 9.500q11.200-10 22.400 0M4 13q8-7 16 0M7.500 16.500q4.500-4 9 0"/><circle cx="12" cy="19" r="1.600" fill="#fff" stroke-width="1"/></svg>
    <svg class="m12" width="24" height="24" viewBox="0 0 24 24" fill="none" stroke="#fff" stroke-width="1.700"><path d="M1 8.500h4L10.500 3.800v16.400L5 15.500H1zM13 9q2 3 0 6M16 6.500q4 5.500 0 11"/><path d="M19 3.500q6 8.500 0 17" stroke="#666"/></svg>
    <svg class="m12" width="24" height="24" viewBox="0 0 24 24" fill="none" stroke="#fff" stroke-width="1.700"><path d="M9 5h8q3.500 0 3.500 3.500V16q0 3-3.500 3H4q-3 0-3-3v-4"/><path d="M9 7.500h8q1.200 0 1.200 1.200v6.600q0 1.200-1.200 1.200H4z" fill="#fff" stroke="none"/><path d="M22 9.500v5" stroke-width="2.200"/><path d="M4 0L0 6.500h3L1.500 11 8 4.500H5L6.500 0z" fill="#fff" stroke="none"/></svg>
    <div class="m24 text-end lh24"><span class="fit" data-w="42">18:01</span><br><span class="fit" data-w="93">11-03-2025</span></div>
  </div>
</div>
<script>
document.querySelectorAll('.fit').forEach(function(el){
  var w=el.getBoundingClientRect().width,n=el.textContent.length;
  el.style.letterSpacing=((el.dataset.w-w)/n).toFixed(3)+'px';
});
</script>
</body>
</html>
